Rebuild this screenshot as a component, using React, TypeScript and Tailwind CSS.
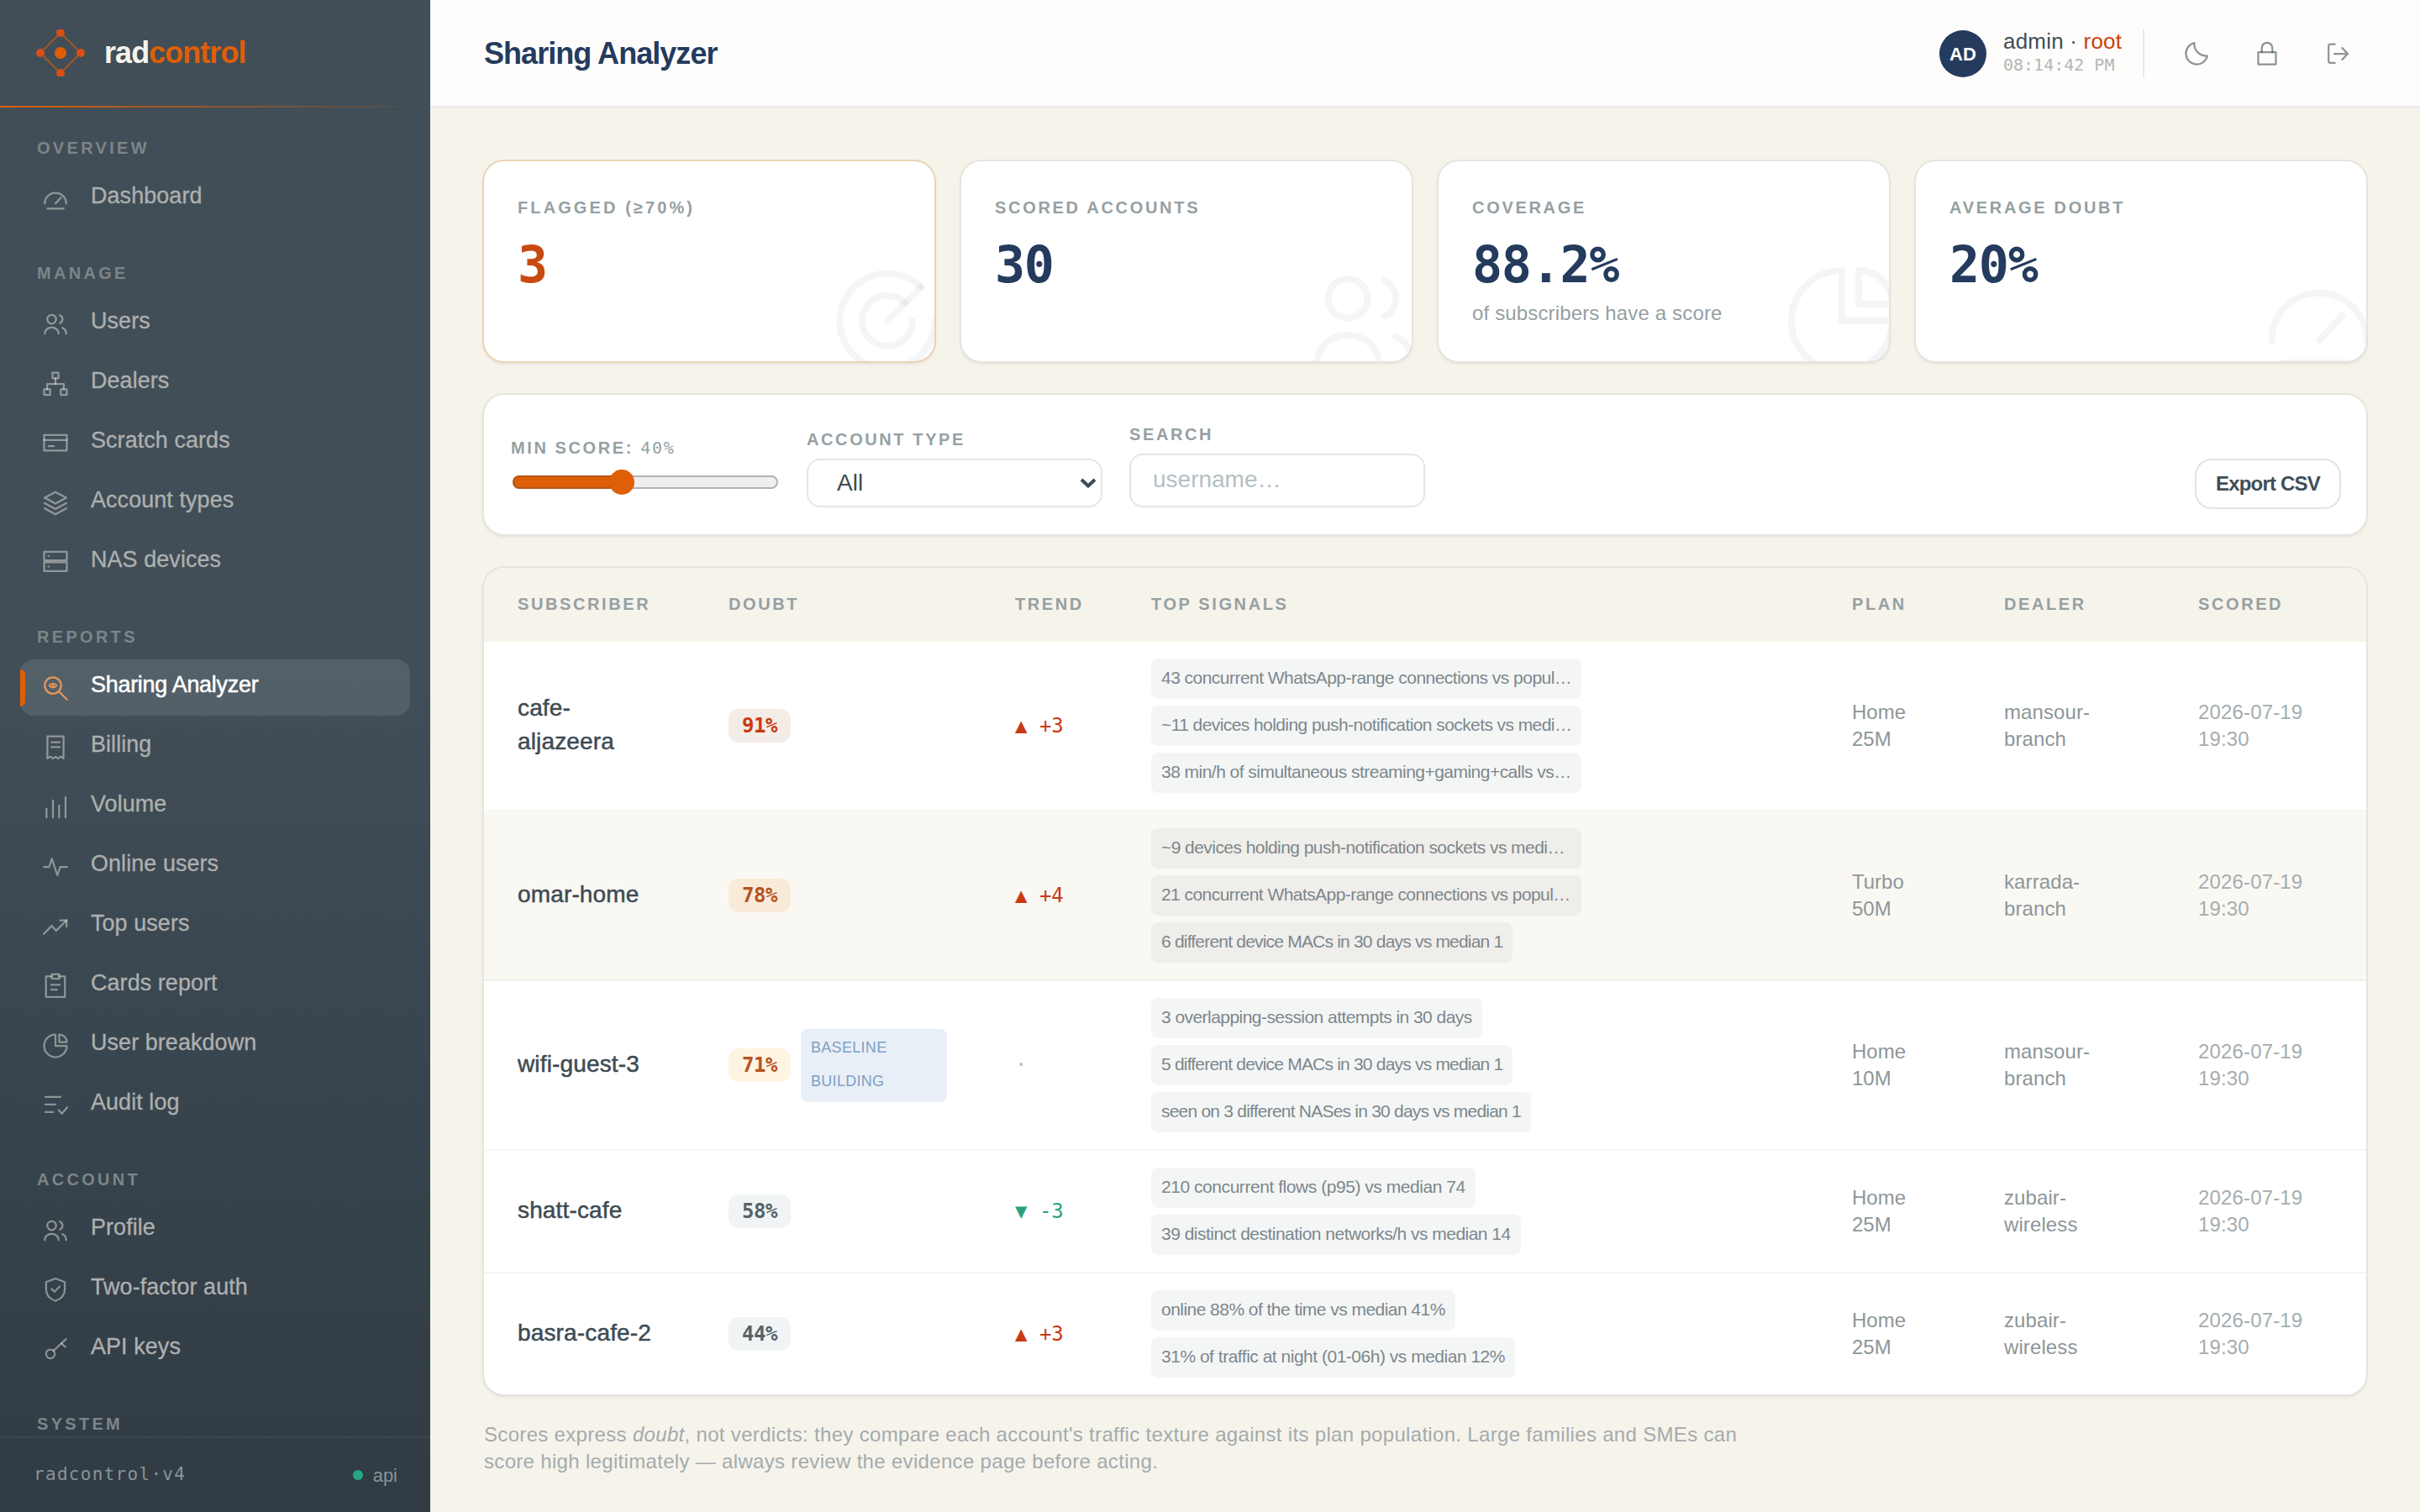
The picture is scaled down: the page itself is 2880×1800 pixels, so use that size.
import { FC, ReactNode } from "react"

interface IconProps{
    children:ReactNode,
    className?:string,
    width?:number,
}
const Icon:FC<IconProps> = ({children,className="size-9",width=1.5})=>(
    <svg viewBox="0 0 24 24" fill="none" stroke="currentColor" strokeWidth={width} strokeLinecap="round" strokeLinejoin="round" className={className}>{children}</svg>
)

const icons = {
    gauge:<><path d="M3.5 15.5a8.5 8.5 0 0 1 17 0"/><path d="M12 15.5l4.2-4.5"/><path d="M5.5 19.5h13"/></>,
    users:<><circle cx="9" cy="8" r="3.5"/><path d="M3.5 19.5a5.5 5 0 0 1 11 0"/><path d="M15.5 4.8a3.5 3.5 0 0 1 0 6.4"/><path d="M17.5 14.8c1.8.7 3 2.4 3 4.7"/></>,
    tree:<><path d="M9.6 3h4.8v4.6H9.6z"/><path d="M3 16.3h4.8v4.4H3z"/><path d="M16.2 16.3H21v4.4h-4.8z"/><path d="M12 7.6V12"/><path d="M5.4 16.3V12h13.2v4.3"/></>,
    card:<><path d="M3 5.2h18v12.4H3z"/><path d="M3 9.2h18"/><path d="M6.5 14h4.3"/></>,
    layers:<><path d="M12 3.1l8.6 4.6L12 12.3 3.4 7.7z"/><path d="M3.4 12l8.6 4.6 8.6-4.6"/><path d="M3.4 16.2l8.6 4.6 8.6-4.6"/></>,
    server:<><path d="M3 3.2h18v6.9H3z"/><path d="M3 11.6h18v7H3z"/><path d="M6.4 6.6h.1M6.4 15.1h.1"/></>,
    analyzer:<><circle cx="10" cy="10" r="6.5"/><path d="M14.8 14.8l6.4 6.4"/><path d="M6.9 10c1.5-2.2 4.7-2.2 6.2 0-1.5 2.2-4.7 2.2-6.2 0z" strokeWidth="1.2"/><circle cx="10" cy="10" r=".6" strokeWidth="1"/></>,
    receipt:<><path d="M5.6 3h12.8v17.6l-2.2-1.5-2.1 1.5-2.1-1.2-2.1 1.2-2.1-1.5-2.2 1.5z"/><path d="M8.8 7.8h6.6M8.8 11.6h6.6"/></>,
    bars:<path d="M4.9 20.2v-7M10 20.2V6.6M14.9 20.2v-9.6M20 20.2V4.1"/>,
    pulse:<path d="M2.8 12h4.3l2-6.6 4.4 13.2 2.3-6.6h5.4"/>,
    trend:<><path d="M2.8 17.8L9 11.4l3.5 4L20.8 7"/><path d="M15.6 7h5.2v5"/></>,
    clipboard:<><path d="M9 4.3H4.5v16.2h15V4.3H15"/><path d="M9 2.6h6V6H9z"/><path d="M8.6 10.9h6.8M8.6 14.8h4.6"/></>,
    pie:<><path d="M12 3a9 9 0 1 0 9 9h-9z"/><path d="M15 3a6 6 0 0 1 6 6h-6z"/></>,
    audit:<><path d="M4 5.3h12M4 11.2h8M4 17.3h6.2"/><path d="M14.5 15.7l2.6 2.8 4.2-5"/></>,
    shield:<><path d="M12 2.7l7.4 2.8v5.6c0 4.4-3 7.8-7.4 9.4-4.4-1.6-7.4-5-7.4-9.4V5.5z"/><path d="M8.9 10.9l2.3 2.3 4.2-4.2"/></>,
    key:<><circle cx="8" cy="15.2" r="3.5"/><path d="M10.5 12.7l9.9-9.3"/><path d="M16.8 6.8l2.9 2.8"/></>,
    target:<><path d="M18 6a8.5 8.5 0 1 0 2.5 6"/><path d="M15.2 8.8A4.5 4.5 0 1 0 16.5 12"/><path d="M12 12l6-6"/></>,
    moon:<path d="M20.6 13.7A8.6 8.6 0 1 1 10.3 3.4c-.5 5.6 3.9 10.6 10.3 10.3z"/>,
    lock:<><path d="M5 10.8h14v9.6H5z"/><path d="M7.8 10.8V7.4a4.2 4.2 0 0 1 8.4 0v3.4"/></>,
    logout:<><path d="M9.8 4.4H6.2q-1.4 0-1.4 1.4v12.1q0 1.4 1.4 1.4h3.6"/><path d="M9.4 12h10.4M15.6 7.4l4.4 4.6-4.4 4.6"/></>,
}

type IconName = keyof typeof icons

const sections:{title:string,items:{label:string,icon:IconName}[]}[] = [
    {title:"Overview",items:[{label:"Dashboard",icon:"gauge"}]},
    {title:"Manage",items:[
        {label:"Users",icon:"users"},
        {label:"Dealers",icon:"tree"},
        {label:"Scratch cards",icon:"card"},
        {label:"Account types",icon:"layers"},
        {label:"NAS devices",icon:"server"},
    ]},
    {title:"Reports",items:[
        {label:"Sharing Analyzer",icon:"analyzer"},
        {label:"Billing",icon:"receipt"},
        {label:"Volume",icon:"bars"},
        {label:"Online users",icon:"pulse"},
        {label:"Top users",icon:"trend"},
        {label:"Cards report",icon:"clipboard"},
        {label:"User breakdown",icon:"pie"},
        {label:"Audit log",icon:"audit"},
    ]},
    {title:"Account",items:[
        {label:"Profile",icon:"users"},
        {label:"Two-factor auth",icon:"shield"},
        {label:"API keys",icon:"key"},
    ]},
    {title:"System",items:[]},
]

const stats:{label:string,value:string,sub?:string,icon:IconName,alert?:boolean}[] = [
    {label:"Flagged (≥70%)",value:"3",icon:"target",alert:true},
    {label:"Scored accounts",value:"30",icon:"users"},
    {label:"Coverage",value:"88.2%",sub:"of subscribers have a score",icon:"pie"},
    {label:"Average doubt",value:"20%",icon:"gauge"},
]

const rows = [
    {name:["cafe-","aljazeera"],doubt:"91%",tone:"bg-[#f4ece6] text-[#c83a14]",trend:3,plan:["Home","25M"],dealer:["mansour-","branch"],
        signals:[
            {text:"43 concurrent WhatsApp-range connections vs popul…",size:"w-[512px] tracking-[-0.53px]"},
            {text:"~11 devices holding push-notification sockets vs medi…",size:"w-[512px] tracking-[-0.58px]"},
            {text:"38 min/h of simultaneous streaming+gaming+calls vs…",size:"w-[512px] tracking-[-0.53px]"},
        ]},
    {name:["omar-home"],doubt:"78%",tone:"bg-[#f9ebd8] text-[#b7521f]",trend:4,plan:["Turbo","50M"],dealer:["karrada-","branch"],hover:true,
        signals:[
            {text:"~9 devices holding push-notification sockets vs medi…",size:"w-[512px] tracking-[-0.56px]"},
            {text:"21 concurrent WhatsApp-range connections vs popul…",size:"w-[512px] tracking-[-0.56px]"},
            {text:"6 different device MACs in 30 days vs median 1",size:"tracking-[-0.8px]"},
        ]},
    {name:["wifi-guest-3"],doubt:"71%",tone:"bg-[#fdf4e2] text-[#b7521f]",trend:0,plan:["Home","10M"],dealer:["mansour-","branch"],building:true,
        signals:[
            {text:"3 overlapping-session attempts in 30 days",size:"tracking-[-0.55px]"},
            {text:"5 different device MACs in 30 days vs median 1",size:"tracking-[-0.8px]"},
            {text:"seen on 3 different NASes in 30 days vs median 1",size:"tracking-[-0.78px]"},
        ]},
    {name:["shatt-cafe"],doubt:"58%",tone:"bg-[#f0f4f5] text-[#55636b]",trend:-3,plan:["Home","25M"],dealer:["zubair-","wireless"],
        signals:[
            {text:"210 concurrent flows (p95) vs median 74",size:"tracking-[-0.45px]"},
            {text:"39 distinct destination networks/h vs median 14",size:"tracking-[-0.52px]"},
        ]},
    {name:["basra-cafe-2"],doubt:"44%",tone:"bg-[#f0f4f5] text-[#55636b]",trend:3,plan:["Home","25M"],dealer:["zubair-","wireless"],
        signals:[
            {text:"online 88% of the time vs median 41%",size:"tracking-[-0.54px]"},
            {text:"31% of traffic at night (01-06h) vs median 12%",size:"tracking-[-0.49px]"},
        ]},
]

const Lines:FC<{text:string[]}> = ({text})=>(
    <>{text.map(line=><span key={line} className="block whitespace-nowrap">{line}</span>)}</>
)

const Sidebar:FC = ()=>{
    return(
        <aside className="flex flex-col w-[512px] h-full shrink-0 bg-linear-to-b from-[#414e57] from-45% to-[#303b44]">
            <div className="flex items-center h-[126px] pl-[42px] gap-[22px] shrink-0">
                <svg viewBox="0 0 60 56" fill="none" className="w-[60px] h-14">
                    <path d="M30 4l24 24-24 24L6 28z" stroke="#de5f07" strokeOpacity=".6" strokeWidth="2"/>
                    <g fill="#d94f16"><circle cx="30" cy="4" r="5" /><circle cx="54" cy="28" r="5"/><circle cx="30" cy="52" r="5"/><circle cx="6" cy="28" r="5"/></g>
                    <circle cx="30" cy="28" r="7" fill="#de5f07"/>
                </svg>
                <span className="text-4xl font-bold tracking-[-0.95px] text-[#f6f3ea]">rad<span className="text-[#de5f07]">control</span></span>
            </div>
            <div className="h-0.5 shrink-0 bg-linear-to-r from-[#de5f07] to-transparent"></div>
            <nav className="flex flex-col flex-1 min-h-0 overflow-hidden gap-[38px] pt-[31px] px-6">
                {sections.map(section=>(
                    <div key={section.title}>
                        <h3 className="pl-5 pt-px mb-[11px] text-xl leading-8 font-bold uppercase tracking-[3.3px] text-[#7d8588]">{section.title}</h3>
                        <div className="flex flex-col gap-1">
                            {section.items.map(item=>{
                                const active = item.label==="Sharing Analyzer"
                                return(
                                    <a key={item.label} className={active?"relative flex items-center gap-6 h-[67px] pl-6 rounded-2xl bg-white/10 text-white":"flex items-center gap-6 h-[67px] pl-6 text-[#aeb0af]"}>
                                        {active && <span className="absolute left-0 top-3 w-1.5 h-11 rounded-r-md bg-[#de5f07]"></span>}
                                        <Icon className={active?"size-9 text-[#e3955c]":"size-9 text-[#f6f3ea]/45"}>{icons[item.icon]}</Icon>
                                        <span className={active?"pb-[7px] text-[27px] tracking-[-0.3px] [-webkit-text-stroke:0.5px]":"pb-[7px] text-[27px] tracking-[0.05px] [-webkit-text-stroke:0.3px]"}>{item.label}</span>
                                    </a>
                                )
                            })}
                        </div>
                    </div>
                ))}
            </nav>
            <div className="flex items-center justify-between h-[90px] shrink-0 border-t-2 border-[#3c4851] pl-10 pr-[39px] text-[#8a9395]">
                <span className="font-['DejaVu_Sans_Mono',monospace] text-[21px] tracking-[1.3px]">radcontrol·v4</span>
                <span className="flex items-center gap-3 text-[22px]"><i className="size-3 rounded-full bg-[#27a883]"></i>api</span>
            </div>
        </aside>
    )
}

const Header:FC = ()=>{
    return(
        <header className="flex items-center justify-between h-32 shrink-0 border-b-2 border-[#ebebea] bg-[#fefdfc] pt-0.5 pl-16 pr-[58px]">
            <h1 className="text-4xl font-bold tracking-[-0.95px] text-[#243b5e]">Sharing Analyzer</h1>
            <div className="flex items-center">
                <span className="flex items-center justify-center size-14 rounded-full bg-[#243b5e] text-white text-[22px] font-bold">AD</span>
                <div className="ml-5 mb-1 w-[166px]">
                    <p className="text-[26px] leading-[30px] whitespace-nowrap tracking-[0.2px] text-[#414e57]">admin · <span className="text-[#cb4309]">root</span></p>
                    <p className="font-['DejaVu_Sans_Mono',monospace] text-xl leading-[26px] text-[#b3b7b8]">08:14:42 PM</p>
                </div>
                <span className="w-0.5 h-[58px] bg-[#e9e9e6] mr-[22px]"></span>
                <div className="flex gap-1 text-[#414e57]/60">
                    <button className="flex items-center justify-center size-20"><Icon>{icons.moon}</Icon></button>
                    <button className="flex items-center justify-center size-20"><Icon>{icons.lock}</Icon></button>
                    <button className="flex items-center justify-center size-20"><Icon>{icons.logout}</Icon></button>
                </div>
            </div>
        </header>
    )
}

const StatCards:FC = ()=>{
    return(
        <div className="grid grid-cols-4 gap-8">
            {stats.map(stat=>(
                <div key={stat.label} className={stat.alert
                    ?"relative overflow-hidden h-[238px] p-10 rounded-3xl bg-white shadow-[0_0_0_2px_#ecd3b4,0_2px_4px_rgba(65,78,87,.2)]"
                    :"relative overflow-hidden h-[238px] p-10 rounded-3xl bg-white shadow-[0_0_0_2px_#e5e4dd,0_2px_4px_rgba(65,78,87,.2)]"}>
                    <p className={stat.alert
                        ?"text-xl leading-[30px] font-bold uppercase tracking-[3.1px] text-[#95a0a3]"
                        :"text-xl leading-[30px] font-bold uppercase tracking-[2.7px] text-[#95a0a3]"}>{stat.label}</p>
                    <p className={stat.alert
                        ?"mt-[17px] mb-px font-['DejaVu_Sans_Mono',monospace] text-6xl leading-[72px] font-bold tracking-[-1.3px] text-[#c84a12]"
                        :"mt-[17px] mb-px font-['DejaVu_Sans_Mono',monospace] text-6xl leading-[72px] font-bold tracking-[-1.3px] text-[#243b5e]"}>{stat.value}</p>
                    {stat.sub && <p className="mt-1.5 text-2xl leading-8 tracking-[0.15px] text-[#95a0a3]">{stat.sub}</p>}
                    <Icon width={1.2} className="absolute -right-6 -bottom-8 size-40 text-[#243b5e]/5">{icons[stat.icon]}</Icon>
                </div>
            ))}
        </div>
    )
}

const Filters:FC = ()=>{
    return(
        <div className="flex items-end gap-8 h-[166px] p-8 rounded-3xl bg-white shadow-[0_0_0_2px_#e5e4dd,0_2px_4px_rgba(65,78,87,.2)]">
            <div className="w-80 pb-[15px]">
                <p className="mb-3 text-xl leading-7 font-bold uppercase tracking-[2.6px] text-[#95a0a3]">Min score: <span className="font-['DejaVu_Sans_Mono',monospace] font-normal tracking-[1.8px]">40%</span></p>
                <div className="relative flex items-center h-[30px] px-0.5">
                    <div className="w-full h-4 rounded-full border-2 border-[#b2b2b2] bg-[#efefef]"></div>
                    <div className="absolute left-0.5 w-[132px] h-4 rounded-l-full border-2 border-r-0 border-[#b5561a] bg-[#de5f07]"></div>
                    <span className="absolute left-[117px] size-[30px] rounded-full bg-[#de5f07]"></span>
                </div>
            </div>
            <div className="w-[352px]">
                <p className="mb-[9px] text-xl leading-7 font-bold uppercase tracking-[2.6px] text-[#95a0a3]">Account type</p>
                <div className="flex items-center justify-between h-[58px] pl-[34px] pr-[5px] rounded-2xl border-2 border-[#e6e6e0] text-[28px] text-[#3d4b54]">
                    All
                    <svg viewBox="0 0 20 12" fill="none" stroke="currentColor" strokeWidth="4" className="w-5 h-3"><path d="M2 2l8 7.5L18 2"/></svg>
                </div>
            </div>
            <div className="w-[352px]">
                <p className="mb-[9px] text-xl leading-7 font-bold uppercase tracking-[2.6px] text-[#95a0a3]">Search</p>
                <div className="flex items-center h-16 pl-[26px] pb-[3px] rounded-2xl border-2 border-[#e6e6e0] text-[28px] text-[#b5c0c4]">username…</div>
            </div>
            <button className="ml-auto w-[170px] h-14 rounded-[18px] bg-white shadow-[0_0_0_2px_#e3e3dc] text-2xl font-bold tracking-[-0.8px] text-[#414e57]">Export CSV</button>
        </div>
    )
}

const Trend:FC<{value:number}> = ({value})=>{
    if(value===0) return <span className="text-[#b5c0c4]">·</span>
    if(value>0) return <span className="text-[#c83a14]">▲ +{value}</span>
    return <span className="text-[#2aa37c]">▼ {value}</span>
}

const SubscriberTable:FC = ()=>{
    return(
        <div className="overflow-hidden rounded-3xl bg-white shadow-[0_0_0_2px_#e5e4dd,0_2px_4px_rgba(65,78,87,.2)]">
            <table className="w-full table-fixed text-left">
                <colgroup>
                    <col className="w-[251px]"/>
                    <col className="w-[341px]"/>
                    <col className="w-[162px]"/>
                    <col className="w-[834px]"/>
                    <col className="w-[181px]"/>
                    <col className="w-[231px]"/>
                    <col className="w-[240px]"/>
                </colgroup>
                <thead>
                    <tr className="h-[88px] bg-[#f6f3eb] text-xl font-bold uppercase tracking-[2.6px] text-[#95a0a3]">
                        {["Subscriber","Doubt","Trend","Top signals","Plan","Dealer","Scored"].map(head=>(
                            <th key={head} className="px-10 pb-0.5 whitespace-nowrap">{head}</th>
                        ))}
                    </tr>
                </thead>
                <tbody>
                    {rows.map(row=>(
                        <tr key={row.name[0]} className={row.hover?"border-b-2 border-[#efeeea] bg-[#faf8f3]":"border-b-2 border-[#f5f5f3] last:border-b-0"}>
                            <td className="pl-10 pb-0.5 text-[28px] leading-10 tracking-[0.15px] text-[#3d4b54] [-webkit-text-stroke:0.5px]"><Lines text={row.name}/></td>
                            <td className="pl-10">
                                <div className="flex items-center gap-3">
                                    <span className={`${row.tone} flex items-center justify-center w-[74px] h-10 shrink-0 rounded-xl font-['DejaVu_Sans_Mono',monospace] text-2xl font-bold tracking-[-0.4px]`}>{row.doubt}</span>
                                    {row.building && (
                                        <span className="w-[174px] h-[87px] py-[2px] pl-3 rounded-lg bg-[#e9eff7] text-lg leading-10 tracking-[0.3px] text-[#7e9fc5]"><Lines text={["BASELINE","BUILDING"]}/></span>
                                    )}
                                </div>
                            </td>
                            <td className="pl-10 font-['DejaVu_Sans_Mono',monospace] text-2xl whitespace-nowrap"><Trend value={row.trend}/></td>
                            <td className="pl-10 py-5">
                                <div className="flex flex-col items-start gap-2">
                                    {row.signals.map(signal=>(
                                        <span key={signal.text} className={`${signal.size} ${row.hover?"bg-[#f0eeea]":"bg-[#f4f6f6]"} h-12 px-3 rounded-lg text-[21px] leading-[46px] whitespace-nowrap text-[#7d878c]`}>{signal.text}</span>
                                    ))}
                                </div>
                            </td>
                            <td className="pl-10 text-2xl leading-8 text-[#8d9699]"><Lines text={row.plan}/></td>
                            <td className="pl-10 text-2xl leading-8 tracking-[0.1px] text-[#8d9699]"><Lines text={row.dealer}/></td>
                            <td className="pl-10 text-2xl leading-8 tracking-[0.15px] text-[#a5adb0]"><Lines text={["2026-07-19","19:30"]}/></td>
                        </tr>
                    ))}
                </tbody>
            </table>
        </div>
    )
}

export default function App(){
    return(
        <div className="flex w-[2880px] h-[1800px] overflow-hidden bg-[#f6f3eb] font-['Liberation_Sans',Arial,sans-serif]">
            <Sidebar/>
            <div className="flex flex-col flex-1 min-w-0">
                <Header/>
                <main className="flex flex-col gap-10 p-16">
                    <StatCards/>
                    <Filters/>
                    <SubscriberTable/>
                    <p className="-mt-[8px] text-2xl leading-8 tracking-[0.32px] text-[#a3abad]">
                        <span className="block">Scores express <em>doubt</em>, not verdicts: they compare each account's traffic texture against its plan population. Large families and SMEs can</span>
                        <span className="block">score high legitimately — always review the evidence page before acting.</span>
                    </p>
                </main>
            </div>
        </div>
    )
}
